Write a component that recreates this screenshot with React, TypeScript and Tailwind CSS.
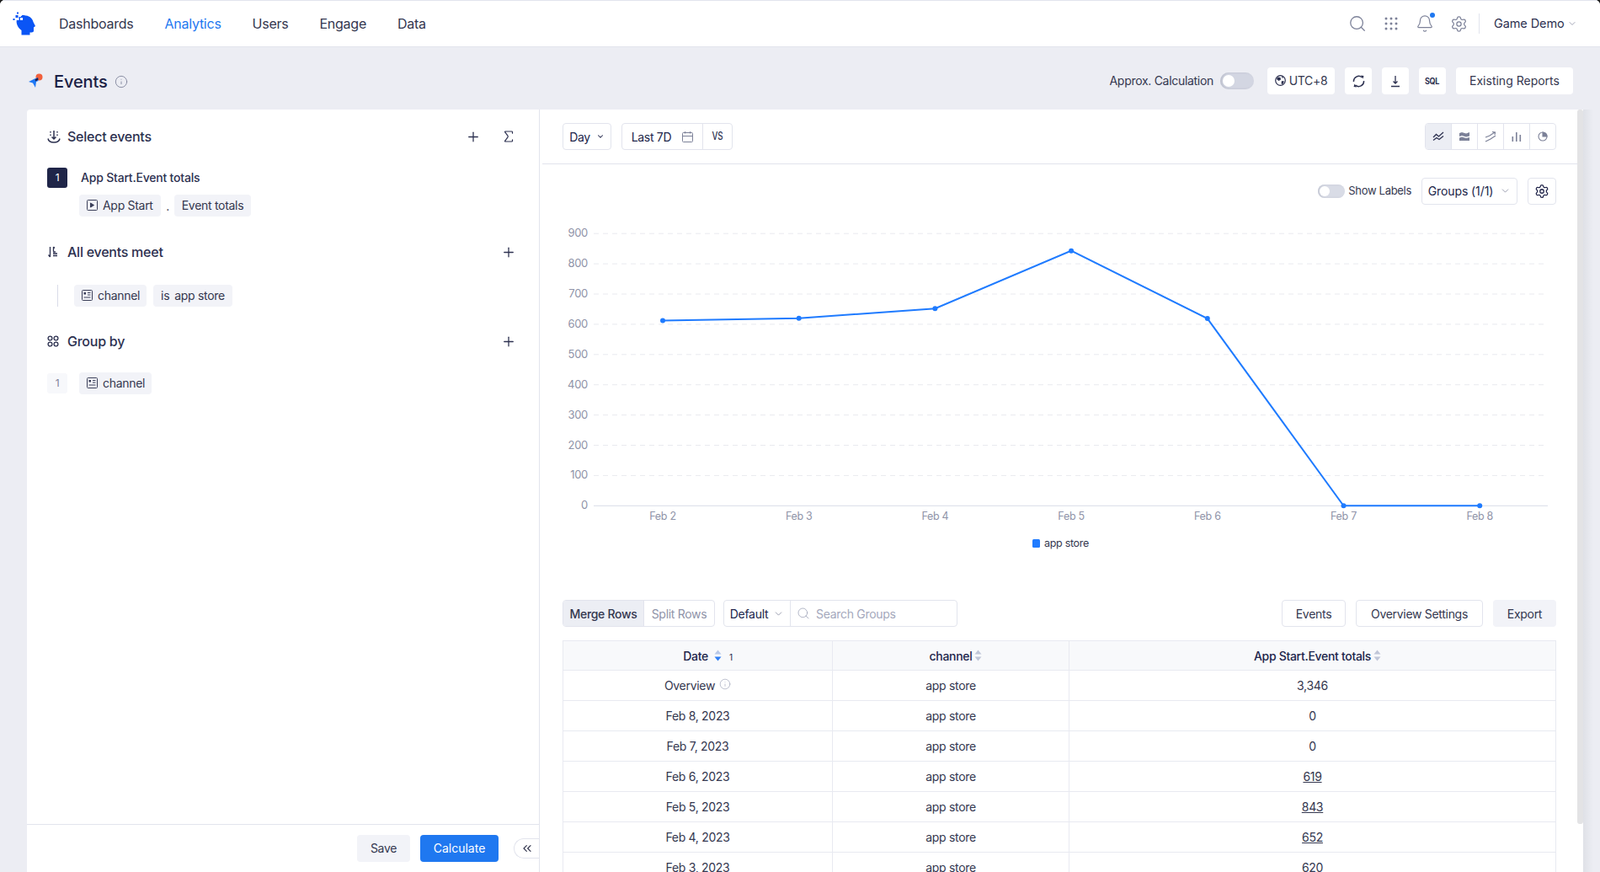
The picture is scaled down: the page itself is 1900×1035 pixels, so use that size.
import { Bell, ChevronDown, ChevronsLeft, Info, Plus, Search, Settings, Sigma } from 'lucide-react'

const font = { fontFamily: 'Inter, "Noto Sans", sans-serif' }

function Logo() {
    return (
        <svg width="27" height="28" viewBox="0 0 27 28" className="shrink-0">
            <path d="M8 6 C14 2 23 5 24.5 12 L27 17 L25 18.5 L25 22.5 C25 24.5 22.5 24.5 20.5 24.5 L20.5 27.5 L10.5 27.5 L10.5 22 C6.5 19 3.5 14 5 9 Z" fill="#0a55f5" />
            <rect x="3.5" y="4" width="3" height="3" fill="#0a55f5" />
            <rect x="0.5" y="8" width="2" height="2" fill="#0a55f5" />
            <rect x="5" y="0.5" width="2" height="2" fill="#0a55f5" />
            <rect x="7" y="3" width="3" height="3" fill="#fff" />
            <rect x="4.5" y="7" width="3" height="3" fill="#fff" />
            <rect x="9" y="7" width="3" height="3" fill="#fff" />
            <rect x="11" y="4" width="3" height="2.5" fill="#0a55f5" />
        </svg>
    )
}

function RocketIcon() {
    return (
        <svg width="18" height="18" viewBox="0 0 18 18" className="shrink-0">
            <circle cx="13.5" cy="4.5" r="4" fill="#f2603c" />
            <path d="M1 10 L8 6.5 L12 5 L12.5 9 L10 10 L9 17 L6 11.5 Z" fill="#1f78f5" />
            <path d="M8.5 7.5 L12 5.2 L12.5 7.5 L9.5 9.5 Z" fill="#1d2147" />
        </svg>
    )
}

function DotsIcon() {
    return (
        <svg width="16" height="16" viewBox="0 0 16 16" fill="#7c8198">
            {[2, 8, 14].map((y) => [2, 8, 14].map((x) => <circle key={`${x}-${y}`} cx={x} cy={y} r="1.5" />))}
        </svg>
    )
}

function SelectIcon() {
    return (
        <svg width="16" height="16" viewBox="0 0 16 16" fill="none" stroke="#2d3150" strokeWidth="1.5">
            <path d="M8 1V11M5.5 8.5L8 11L10.5 8.5" />
            <path d="M4 2V3.5M4 5.5V7M12 2V3.5M12 5.5V7" />
            <path d="M1 10.5C1.5 13 4 15 8 15C12 15 14.5 13 15 10.5" />
        </svg>
    )
}

function FilterIcon() {
    return (
        <svg width="14" height="14" viewBox="0 0 14 14" fill="none" stroke="#2d3150" strokeWidth="1.3">
            <path d="M3.5 1V13M1.5 10.5L3.5 13" />
            <path d="M7.5 1V6.5M7.5 1L9 2.5" />
            <path d="M7 9H12M7 11.5H12M10 7H7" />
        </svg>
    )
}

function GroupIcon() {
    return (
        <svg width="14" height="14" viewBox="0 0 14 14" fill="none" stroke="#2d3150" strokeWidth="1.3">
            <circle cx="3.5" cy="3.5" r="2.4" />
            <circle cx="10.5" cy="3.5" r="2.4" />
            <circle cx="3.5" cy="10.5" r="2.4" />
            <circle cx="10.5" cy="10.5" r="2.4" />
        </svg>
    )
}

function EventChipIcon() {
    return (
        <svg width="13" height="13" viewBox="0 0 13 13" fill="none" stroke="#3a3e58" strokeWidth="1">
            <rect x="0.5" y="0.5" width="12" height="12" rx="1" />
            <path d="M4.5 4L8.5 6.5L4.5 9Z" fill="#3a3e58" />
        </svg>
    )
}

function PropChipIcon() {
    return (
        <svg width="13" height="13" viewBox="0 0 13 13" fill="none" stroke="#3a3e58" strokeWidth="1">
            <rect x="0.5" y="0.5" width="12" height="12" rx="1" />
            <rect x="2.5" y="3" width="2.5" height="2.5" fill="#3a3e58" stroke="none" />
            <path d="M7 3.5H10.5M7 6H10.5M2.5 9H10.5" />
        </svg>
    )
}

function CalendarIcon() {
    return (
        <svg width="13" height="13" viewBox="0 0 13 13" fill="none" stroke="#7c8198" strokeWidth="1">
            <rect x="0.5" y="1.5" width="12" height="11" rx="1" />
            <path d="M0.5 5.5H12.5M3.5 0V2.5M9.5 0V2.5" />
        </svg>
    )
}

function RefreshIcon() {
    return (
        <svg width="15" height="15" viewBox="0 0 15 15" fill="none" stroke="#2d3150" strokeWidth="1.5">
            <path d="M1.5 8A6 6 0 0 1 11.5 3" />
            <path d="M13.5 7A6 6 0 0 1 3.5 12" />
            <path d="M10 0.5L13.5 1L12.5 4.5Z" fill="#2d3150" stroke="none" />
            <path d="M5 14.5L1.5 14L2.5 10.5Z" fill="#2d3150" stroke="none" />
        </svg>
    )
}

function TrendIcon({ active }: { active?: boolean }) {
    return (
        <svg width="14" height="12" viewBox="0 0 14 12" fill="none" stroke={active ? '#2d3150' : '#7c8198'} strokeWidth="1.3">
            <path d="M1 7L4.5 3.5L7.5 6L13 1" />
            <path d="M1 10.5L5 7.5L8 9.5L13 5.5" />
        </svg>
    )
}

function AreaIcon() {
    return (
        <svg width="14" height="12" viewBox="0 0 14 12" fill="#7c8198">
            <path d="M1 2L4 1L9 2.5L13 1V5.5L9 6.5L4 5L1 6Z" />
            <path d="M1 7.5L4 6.5L9 8L13 7V11H1Z" />
        </svg>
    )
}

function ArrowsIcon() {
    return (
        <svg width="14" height="14" viewBox="0 0 14 14" fill="none" stroke="#7c8198" strokeWidth="1.2">
            <path d="M1 8L6 6L12 2M9 1.5L12.5 2L12 5" />
            <path d="M1 13L7 10L13 6" />
        </svg>
    )
}

function BarsIcon() {
    return (
        <svg width="12" height="12" viewBox="0 0 12 12" fill="#7c8198">
            <rect x="0.5" y="6" width="1.6" height="6" />
            <rect x="5" y="1" width="1.6" height="11" />
            <rect x="9.5" y="4" width="1.6" height="8" />
        </svg>
    )
}

function PieIcon() {
    return (
        <svg width="12" height="12" viewBox="0 0 12 12" fill="none" stroke="#7c8198" strokeWidth="1.1">
            <circle cx="6" cy="6" r="5" />
            <path d="M6 1V6H11A5 5 0 0 0 6 1Z" fill="#7c8198" />
        </svg>
    )
}

function GlobeIcon() {
    return (
        <svg width="13" height="13" viewBox="0 0 13 13">
            <circle cx="6.5" cy="6.5" r="5.8" fill="none" stroke="#2d3150" strokeWidth="1.2" />
            <path d="M3 2.5L6.5 3L7 5.5L4.5 7L2 5Z M8 7L11 7.5L9 11.5L7.5 10Z M8 1.5L10.5 3L8.5 3.8Z" fill="#2d3150" />
        </svg>
    )
}

function DownloadIcon() {
    return (
        <svg width="14" height="15" viewBox="0 0 14 15" fill="none" stroke="#2d3150" strokeWidth="1.3">
            <path d="M7 1V9.5M4.5 7.5L7 10L9.5 7.5M2 13.5H12" />
        </svg>
    )
}

function SortIcon({ active }: { active?: boolean }) {
    return (
        <svg width="9" height="14" viewBox="0 0 9 14" className="shrink-0">
            <path d="M4.5 0.5L8.5 5.5H0.5Z" fill={active ? '#b8c8e8' : '#c0c6d8'} />
            <path d="M4.5 13.5L0.5 8.5H8.5Z" fill={active ? '#2f7ff5' : '#c0c6d8'} />
        </svg>
    )
}

function Toggle({ small }: { small?: boolean }) {
    return (
        <div className={small ? 'flex h-4 w-8 items-center rounded-full bg-[#d9dce6] shadow-[inset_2px_0_3px_#c5c8d4]' : 'flex h-5 w-10 items-center rounded-full bg-[#d3d6e2] shadow-[inset_2px_0_3px_#bcbfcc]'}>
            <div className={small ? 'ml-[2px] h-3 w-3 rounded-full bg-white' : 'ml-[3px] h-[14px] w-[14px] rounded-full bg-white'} />
        </div>
    )
}

function Chip({ children, className = '' }: { children: React.ReactNode; className?: string }) {
    return <div className={`flex h-[26px] items-center gap-[6px] rounded-[4px] bg-[#f2f3f8] pb-[2px] text-[14px] text-[#34374f] ${className}`}>{children}</div>
}

function SectionHead({ icon, title, actions }: { icon: React.ReactNode; title: string; actions: React.ReactNode }) {
    return (
        <div className="flex h-6 items-center pr-[3px]">
            <div className="flex w-6 items-center">{icon}</div>
            <span className="text-[16px] font-medium tracking-[-0.25px] text-[#2d3150]">{title}</span>
            <div className="ml-auto flex items-center gap-6 text-[#2d3150]">{actions}</div>
        </div>
    )
}

function ActionIcon({ children }: { children: React.ReactNode }) {
    return <div className="flex w-[18px] items-center justify-center">{children}</div>
}

function LeftPanel() {
    const plus = (
        <ActionIcon>
            <Plus size={21} strokeWidth={1.7} />
        </ActionIcon>
    )
    return (
        <div className="flex w-[609px] shrink-0 flex-col rounded-tl-[4px] border-r border-[#e2e4ed] bg-white">
            <div className="flex-1 px-6 pt-5">
                <SectionHead
                    icon={<SelectIcon />}
                    title="Select events"
                    actions={
                        <>
                            {plus}
                            <ActionIcon>
                                <Sigma size={20} strokeWidth={1.6} />
                            </ActionIcon>
                        </>
                    }
                />
                <div className="mt-[25px] flex items-center">
                    <div className="flex h-6 w-6 items-center justify-center rounded-[3px] bg-[#1f2548] text-[12px] text-white">1</div>
                    <span className="ml-4 pb-[1px] text-[14px] font-medium tracking-[-0.2px] text-[#2d3150]">App Start.Event totals</span>
                </div>
                <div className="mt-2 ml-[38px] flex items-center">
                    <Chip className="w-[97px] pl-[9px]">
                        <EventChipIcon />
                        <span>App Start</span>
                    </Chip>
                    <span className="w-4 text-center text-[14px] text-[#34374f]">.</span>
                    <Chip className="w-[91px] justify-center">Event totals</Chip>
                </div>
                <div className="mt-[30px]">
                    <SectionHead icon={<FilterIcon />} title="All events meet" actions={plus} />
                </div>
                <div className="mt-[27px] ml-3 flex items-center">
                    <div className="h-[26px] w-px bg-[#d9dce8]" />
                    <Chip className="ml-[19px] w-[86px] pl-[9px]">
                        <PropChipIcon />
                        <span>channel</span>
                    </Chip>
                    <Chip className="ml-2 w-[94px] justify-center gap-[6px]">
                        <span>is</span>
                        <span>app store</span>
                    </Chip>
                </div>
                <div className="mt-[29px]">
                    <SectionHead icon={<GroupIcon />} title="Group by" actions={plus} />
                </div>
                <div className="mt-[25px] flex items-center">
                    <div className="flex h-6 w-6 items-center justify-center rounded-[3px] bg-[#f7f8fb] text-[12px] text-[#7c8198]">1</div>
                    <Chip className="ml-[14px] w-[86px] pl-[9px]">
                        <PropChipIcon />
                        <span>channel</span>
                    </Chip>
                </div>
            </div>
            <div className="flex h-[57px] items-start justify-end border-t border-[#e2e4ed] pt-3">
                <button className="h-8 w-[63px] rounded-[4px] bg-[#f2f3f8] pb-[2px] text-[14px] text-[#34374f]">Save</button>
                <button className="ml-3 h-8 w-[93px] rounded-[4px] bg-[#1f78f0] pb-[2px] text-[14px] tracking-normal text-white">Calculate</button>
                <div className="mt-1 ml-[18px] flex h-6 w-[30px] items-center justify-center rounded-l-full border border-r-0 border-[#e2e4ed] text-[#34374f]">
                    <ChevronsLeft size={16} strokeWidth={1.8} />
                </div>
            </div>
        </div>
    )
}

const yTicks = [900, 800, 700, 600, 500, 400, 300, 200, 100, 0]
const points = [
    { label: 'Feb 2', value: 612 },
    { label: 'Feb 3', value: 620 },
    { label: 'Feb 4', value: 652 },
    { label: 'Feb 5', value: 843 },
    { label: 'Feb 6', value: 619 },
    { label: 'Feb 7', value: 0 },
    { label: 'Feb 8', value: 0 },
]
const px = (i: number) => 787 + i * 161.7
const py = (v: number) => 600.3 - v * 0.359

function Chart() {
    return (
        <svg width="1232" height="400" viewBox="641 260 1232 400" className="mt-[17px] block">
            {yTicks.map((t) => (
                <g key={t}>
                    <line x1="705" x2="1838" y1={py(t)} y2={py(t)} stroke={t === 0 ? '#d9dce8' : '#e9eaef'} strokeDasharray={t === 0 ? undefined : '6 5'} />
                    <text x="698" y={py(t) + 4} textAnchor="end" fontSize="13" fill="#8f93a8">
                        {t}
                    </text>
                </g>
            ))}
            <polyline points={points.map((p, i) => `${px(i)},${py(p.value)}`).join(' ')} fill="none" stroke="#1f7bff" strokeWidth="2" />
            {points.map((p, i) => (
                <g key={p.label}>
                    <circle cx={px(i)} cy={py(p.value)} r="3" fill="#1f7bff" />
                    <text x={px(i)} y="617" textAnchor="middle" fontSize="12.5" fill="#8f93a8">
                        {p.label}
                    </text>
                </g>
            ))}
            <rect x="1226" y="640" width="9" height="10" rx="1.5" fill="#1f7bff" />
            <text x="1240" y="649" fontSize="12.5" fill="#34374f">
                app store
            </text>
        </svg>
    )
}

const rows = [
    { date: 'Feb 8, 2023', total: '0' },
    { date: 'Feb 7, 2023', total: '0' },
    { date: 'Feb 6, 2023', total: '619', link: true },
    { date: 'Feb 5, 2023', total: '843', link: true },
    { date: 'Feb 4, 2023', total: '652', link: true },
    { date: 'Feb 3, 2023', total: '620', link: true },
]

function DataTable() {
    const cell = 'h-9 border border-[#e8eaf1] p-0 pb-[1px] text-center text-[14px] text-[#34374f]'
    const head = 'h-[35px] border border-[#e8eaf1] bg-[#f8f9fb] p-0 text-center text-[14px] font-medium text-[#21254a]'
    return (
        <table className="mt-4 w-[1180px] table-fixed border-collapse">
            <colgroup>
                <col className="w-[320px]" />
                <col className="w-[281px]" />
                <col />
            </colgroup>
            <thead>
                <tr>
                    <th className={head}>
                        <div className="flex items-center justify-center gap-[7px] pl-6">
                            Date <SortIcon active />
                            <span className="mt-1 ml-[2px] font-['Liberation_Serif'] text-[10px] font-normal">1</span>
                        </div>
                    </th>
                    <th className={head}>
                        <div className="flex items-center justify-center gap-[3px] pl-3">
                            channel <SortIcon />
                        </div>
                    </th>
                    <th className={head}>
                        <div className="flex items-center justify-center gap-[3px] pl-3">
                            App Start.Event totals <SortIcon />
                        </div>
                    </th>
                </tr>
            </thead>
            <tbody>
                <tr>
                    <td className={cell}>
                        <div className="flex items-center justify-center gap-[5px]">
                            Overview <Info size={14} strokeWidth={1.2} className="mb-[2px] text-[#a4a8bc]" />
                        </div>
                    </td>
                    <td className={cell}>app store</td>
                    <td className={cell}>3,346</td>
                </tr>
                {rows.map((r) => (
                    <tr key={r.date}>
                        <td className={cell}>{r.date}</td>
                        <td className={cell}>app store</td>
                        <td className={cell}>{r.link ? <span className="underline">{r.total}</span> : r.total}</td>
                    </tr>
                ))}
            </tbody>
        </table>
    )
}

function RightPanel() {
    const chartTypes = [<TrendIcon active key="t" />, <AreaIcon key="a" />, <ArrowsIcon key="s" />, <BarsIcon key="b" />, <PieIcon key="p" />]
    return (
        <div className="flex min-w-0 flex-1 bg-white">
            <div className="min-w-0 flex-1 overflow-hidden">
                <div className="ml-[3px] flex h-[65px] items-center border-b border-[#e2e4ed] pr-[25px] pl-6 text-[14px] text-[#21254a]">
                    <div className="flex h-8 w-[58px] items-center justify-center gap-[7px] rounded-[4px] border border-[#e2e4ed]">
                        Day <ChevronDown size={10} strokeWidth={2.5} />
                    </div>
                    <div className="ml-3 flex h-8 w-[132px] items-center rounded-[4px] border border-[#e2e4ed]">
                        <div className="flex h-full w-[96px] items-center justify-center gap-[13px] border-r border-[#e2e4ed]">
                            Last 7D <CalendarIcon />
                        </div>
                        <span className="flex-1 scale-x-75 text-center text-[13px] font-medium text-[#2d3150]">VS</span>
                    </div>
                    <div className="ml-auto flex h-8 w-[156px] items-stretch overflow-hidden rounded-[4px] border border-[#e2e4ed]">
                        {chartTypes.map((icon, i) => (
                            <div key={i} className={`flex flex-1 items-center justify-center border-r border-[#e2e4ed] last:border-r-0 ${i === 0 ? 'bg-[#eceef4]' : ''}`}>
                                {icon}
                            </div>
                        ))}
                    </div>
                </div>
                <div className="mt-4 flex h-8 items-center justify-end pr-[25px] text-[#21254a]">
                    <Toggle small />
                    <span className="ml-1 text-[13px] text-[#34374f]">Show Labels</span>
                    <div className="ml-3 flex h-8 w-[114px] items-center justify-center gap-2 rounded-[4px] border border-[#e2e4ed] pb-[2px] text-[14px] tracking-[-0.1px]">
                        Groups (1/1) <ChevronDown size={13} strokeWidth={1.4} className="text-[#7c8198]" />
                    </div>
                    <div className="ml-3 flex h-8 w-[34px] items-center justify-center rounded-[4px] border border-[#e2e4ed]">
                        <Settings size={18} strokeWidth={1.7} />
                    </div>
                </div>
                <Chart />
                <div className="mt-[52px] ml-[27px] w-[1180px]">
                    <div className="flex h-8 items-stretch text-[14px] text-[#34374f]">
                        <div className="flex w-[181px] overflow-hidden rounded-[4px] border border-[#e2e4ed]">
                            <div className="flex w-[96px] items-center justify-center border-r border-[#e2e4ed] bg-[#eceef4] font-medium">Merge Rows</div>
                            <div className="flex flex-1 items-center justify-center text-[#8f93a8]">Split Rows</div>
                        </div>
                        <div className="ml-[10px] flex w-[278px] rounded-[4px] border border-[#e2e4ed]">
                            <div className="flex w-[79px] items-center justify-center gap-[6px] border-r border-[#e2e4ed] text-[#21254a]">
                                Default <ChevronDown size={13} strokeWidth={1.4} className="text-[#7c8198]" />
                            </div>
                            <div className="flex flex-1 items-center gap-[7px] pl-[7px] text-[#a4a8bc]">
                                <Search size={16} strokeWidth={1.3} />
                                <span>Search Groups</span>
                            </div>
                        </div>
                        <div className="ml-auto flex w-[76px] items-center justify-center rounded-[4px] border border-[#e2e4ed]">Events</div>
                        <div className="ml-3 flex w-[151px] items-center justify-center rounded-[4px] border border-[#e2e4ed]">Overview Settings</div>
                        <div className="ml-3 flex w-[75px] items-center justify-center rounded-[4px] bg-[#f2f3f8]">Export</div>
                    </div>
                    <DataTable />
                </div>
            </div>
            <div className="w-[7px] shrink-0">
                <div className="h-[848px] rounded-[3px] bg-[#e3e3e5]" />
            </div>
        </div>
    )
}

function TopIcon({ children }: { children: React.ReactNode }) {
    return <div className="flex w-6 items-center justify-center">{children}</div>
}

export default function App() {
    const navItems = ['Dashboards', 'Analytics', 'Users', 'Engage', 'Data']
    return (
        <div className="h-[1035px] w-[1900px] overflow-hidden bg-[#1c1c1c] tracking-[-0.3px]" style={font}>
            <div className="flex h-full flex-col overflow-hidden rounded-t-[6px] bg-[#ecedf3]">
                <header className="flex h-[56px] shrink-0 items-center border-t border-b border-[#e2e4ed] bg-white pl-[15px]">
                    <Logo />
                    <nav className="ml-[28px] flex gap-[37px] text-[16px] tracking-[-0.25px] text-[#34374f]">
                        {navItems.map((n) => (
                            <span key={n} className={n === 'Analytics' ? 'text-[#1f78f0]' : ''}>
                                {n}
                            </span>
                        ))}
                    </nav>
                    <div className="ml-auto flex items-center pr-[27px] text-[#7c8198]">
                        <div className="flex gap-4">
                            <TopIcon>
                                <Search size={22} strokeWidth={1.4} />
                            </TopIcon>
                            <TopIcon>
                                <DotsIcon />
                            </TopIcon>
                            <TopIcon>
                                <div className="relative">
                                    <Bell size={22} strokeWidth={1.3} />
                                    <div className="absolute -top-[2px] -right-[1px] h-[6px] w-[6px] rounded-full bg-[#1f78f0]" />
                                </div>
                            </TopIcon>
                            <TopIcon>
                                <Settings size={21} strokeWidth={1.4} />
                            </TopIcon>
                        </div>
                        <div className="ml-3 h-6 w-px bg-[#e2e4ed]" />
                        <span className="ml-[17px] w-[82px] text-[14.5px] tracking-[-0.1px] whitespace-nowrap text-[#2d3150]">Game Demo</span>
                        <ChevronDown size={12} strokeWidth={1.4} className="ml-[5px]" />
                    </div>
                </header>
                <div className="flex h-[74px] shrink-0 items-center pt-[6px] pr-[32px] pl-[33px]">
                    <RocketIcon />
                    <span className="ml-[13px] pt-[1px] text-[20px] font-medium tracking-[-0.1px] text-[#1b1f45]">Events</span>
                    <Info size={16} strokeWidth={1.3} className="ml-2 mt-[1px] text-[#7c8198]" />
                    <div className="ml-auto flex items-center text-[14px] text-[#34374f]">
                        <span className="pb-[2px]">Approx. Calculation</span>
                        <div className="ml-2">
                            <Toggle />
                        </div>
                        <div className="ml-4 flex h-8 w-20 items-center justify-center gap-1 rounded-[4px] bg-white pb-[1px]">
                            <GlobeIcon />
                            UTC+8
                        </div>
                        <div className="ml-3 flex h-8 w-8 items-center justify-center rounded-[4px] bg-white">
                            <RefreshIcon />
                        </div>
                        <div className="ml-3 flex h-8 w-8 items-center justify-center rounded-[4px] bg-white">
                            <DownloadIcon />
                        </div>
                        <div className="ml-3 flex h-8 w-8 items-center justify-center rounded-[4px] bg-white">
                            <span className="scale-x-90 text-[10px] font-bold text-[#2d3150]">SQL</span>
                        </div>
                        <div className="ml-3 flex h-8 w-[139px] items-center justify-center rounded-[4px] bg-white pb-[2px] tracking-normal">Existing Reports</div>
                    </div>
                </div>
                <main className="flex min-h-0 flex-1 pr-2 pl-[32px]">
                    <LeftPanel />
                    <RightPanel />
                    <div className="w-3 shrink-0 bg-linear-to-r from-[#dfe1e7] to-[#ecedf3]" />
                </main>
            </div>
        </div>
    )
}
